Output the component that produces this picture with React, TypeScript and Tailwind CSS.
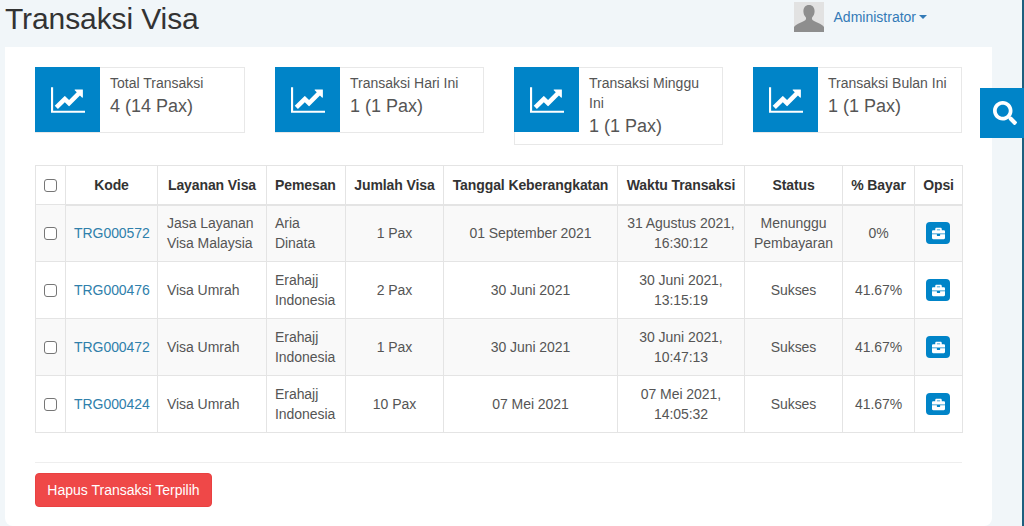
import { FaBriefcase, FaSearch } from "react-icons/fa";

const tiles = [
  { title: "Total Transaksi", value: "4 (14 Pax)", w: "w-[210px]" },
  { title: "Transaksi Hari Ini", value: "1 (1 Pax)", w: "w-[209px]" },
  { title: "Transaksi Minggu Ini", value: "1 (1 Pax)", w: "w-[209px]" },
  { title: "Transaksi Bulan Ini", value: "1 (1 Pax)", w: "w-[209px]" },
];

const headers = [
  { label: "Kode", cls: "w-[92px] text-center" },
  { label: "Layanan Visa", cls: "w-[109px] text-center" },
  { label: "Pemesan", cls: "w-[79px] text-left" },
  { label: "Jumlah Visa", cls: "w-[98px] text-center" },
  { label: "Tanggal Keberangkatan", cls: "w-[174px] text-center" },
  { label: "Waktu Transaksi", cls: "w-[127px] text-center" },
  { label: "Status", cls: "w-[98px] text-center" },
  { label: "% Bayar", cls: "w-[72px] text-center" },
  { label: "Opsi", cls: "w-[48px] text-center" },
];

const rows = [
  { kode: "TRG000572", layanan: ["Jasa Layanan", "Visa Malaysia"], pemesan: ["Aria", "Dinata"], jumlah: "1 Pax", tanggal: "01 September 2021", waktu: ["31 Agustus 2021,", "16:30:12"], status: ["Menunggu", "Pembayaran"], bayar: "0%" },
  { kode: "TRG000476", layanan: ["Visa Umrah"], pemesan: ["Erahajj", "Indonesia"], jumlah: "2 Pax", tanggal: "30 Juni 2021", waktu: ["30 Juni 2021,", "13:15:19"], status: ["Sukses"], bayar: "41.67%" },
  { kode: "TRG000472", layanan: ["Visa Umrah"], pemesan: ["Erahajj", "Indonesia"], jumlah: "1 Pax", tanggal: "30 Juni 2021", waktu: ["30 Juni 2021,", "10:47:13"], status: ["Sukses"], bayar: "41.67%" },
  { kode: "TRG000424", layanan: ["Visa Umrah"], pemesan: ["Erahajj", "Indonesia"], jumlah: "10 Pax", tanggal: "07 Mei 2021", waktu: ["07 Mei 2021,", "14:05:32"], status: ["Sukses"], bayar: "41.67%" },
];

function Lines({ items }: { items: string[] }) {
  return (
    <>
      {items.map((t) => (
        <div key={t}>{t}</div>
      ))}
    </>
  );
}

function Checkbox() {
  return <span className="mx-auto block h-[13px] w-[13px] rounded-[3px] border border-[#767676] bg-white" />;
}

function ChartIcon() {
  return (
    <svg width="34" height="30" viewBox="0 0 2048 1792" fill="currentColor" className="block">
      <path d="M2048 1536v128h-2048v-1536h128v1408h1920zm-128-1248v435q0 21-19.500 29.500t-35.500-7.500l-121-121-633 633q-10 10-23 10t-23-10l-233-233-416 416-192-192 585-585q10-10 23-10t23 10l233 233 464-464-121-121q-16-16-7.500-35.500t29.500-19.500h435q14 0 23 9t9 23z" />
    </svg>
  );
}

export default function App() {
  const cell = "border border-[#e4e4e4] px-[9px] align-middle";
  return (
    <div className="relative h-[526px] w-[1024px] overflow-hidden bg-[#f1f6f9] font-['Liberation_Sans',Arial,sans-serif] text-[14px] leading-[20px] text-[#555]">
      <header className="flex h-[47px] items-start justify-between pl-[5px]">
        <h1 className="text-[30px] leading-[38px] font-normal tracking-[-0.1px] text-[#333]">Transaksi Visa</h1>
        <div className="mr-[97px] flex items-center gap-[10px] pt-[2px]">
          <svg width="30" height="30" viewBox="0 0 30 30" className="block">
            <rect width="30" height="30" fill="#e2e2e2" />
            <path d="M15 3c-3.600 0-5.600 2.600-5.600 6.200 0 2.600 1 4.600 2.400 6 .4 1 .3 2-.3 2.700C9 20 2.500 21.300 0 25v5h30v-5c-2.500-3.700-9-5-11.500-7.100-.6-.7-.7-1.700-.3-2.700 1.400-1.400 2.400-3.400 2.400-6C20.600 5.600 18.600 3 15 3z" fill="#8e8e8e" />
          </svg>
          <span className="flex items-center gap-[3px] text-[#337ab7]">
            Administrator
            <span className="h-0 w-0 border-x-[4.500px] border-t-[4.500px] border-x-transparent border-t-[#337ab7]" />
          </span>
        </div>
      </header>

      <main className="ml-[5px] h-[479px] w-[987px] rounded-b-[8px] bg-white px-[30px] pt-[20px]">
        <section className="flex items-start gap-[30px]">
          {tiles.map((t) => (
            <div key={t.title} className={`flex min-h-[66px] ${t.w} items-start border border-[#e8e8e8] bg-white`}>
              <div className="-mt-px -ml-px flex h-[65px] w-[65px] shrink-0 items-center justify-center bg-[#0084c8] text-white">
                <ChartIcon />
              </div>
              <div className="min-w-0 flex-1 pt-[5px] pr-[10px] pb-[6px] pl-[10px]">
                <div className="text-[14px] leading-[20px] text-[#555]">{t.title}</div>
                <div className="mt-px text-[18px] leading-[24px] text-[#555]">{t.value}</div>
              </div>
            </div>
          ))}
        </section>

        <table className="mt-[20px] w-[927px] table-fixed border-collapse text-[14px]">
          <thead>
            <tr className="h-[39px]">
              <th className={`${cell} w-[30px] !px-0`}>
                <Checkbox />
              </th>
              {headers.map((h) => (
                <th key={h.label} className={`${cell} ${h.cls} border-b-2 text-[14px] font-bold tracking-[-0.1px] whitespace-nowrap text-[#333] !px-[8px]`}>
                  {h.label}
                </th>
              ))}
            </tr>
          </thead>
          <tbody className="tracking-[-0.05px]">
            {rows.map((r, i) => (
              <tr key={r.kode} className={`h-[57px] ${i % 2 === 0 ? "bg-[#f9f9f9]" : "bg-white"}`}>
                <td className={`${cell} !px-0`}>
                  <Checkbox />
                </td>
                <td className={`${cell} !px-[8px] text-center text-[#2f80ab]`}>{r.kode}</td>
                <td className={cell}>
                  <Lines items={r.layanan} />
                </td>
                <td className={`${cell} !pr-0 !pl-[8px]`}>
                  <Lines items={r.pemesan} />
                </td>
                <td className={`${cell} text-center`}>{r.jumlah}</td>
                <td className={`${cell} text-center`}>{r.tanggal}</td>
                <td className={`${cell} !px-0 text-center`}>
                  <Lines items={r.waktu} />
                </td>
                <td className={`${cell} !px-0 text-center`}>
                  <Lines items={r.status} />
                </td>
                <td className={`${cell} text-center`}>{r.bayar}</td>
                <td className={`${cell} !px-0`}>
                  <span className="ml-[11px] flex h-[22px] w-[24px] items-center justify-center rounded-[4px] bg-[#0084c8] text-white">
                    <FaBriefcase size={13} />
                  </span>
                </td>
              </tr>
            ))}
          </tbody>
        </table>

        <hr className="mt-[29px] border-t border-[#eeeeee]" />

        <button className="mt-[10px] h-[34px] w-[177px] rounded-[4px] border border-[#e94141] bg-[#ef4848] text-center text-[14px] text-white">
          Hapus Transaksi Terpilih
        </button>
      </main>

      {/* floating search tab and the window's right edge */}
      <div className="absolute top-0 right-0 h-full w-[2px] bg-[#1d5f7e]" />
      <div className="absolute top-[88px] right-0 flex h-[50px] w-[44px] items-center justify-center bg-[#0084c8] pl-[6px] text-white">
        <FaSearch size={24} />
      </div>
    </div>
  );
}
